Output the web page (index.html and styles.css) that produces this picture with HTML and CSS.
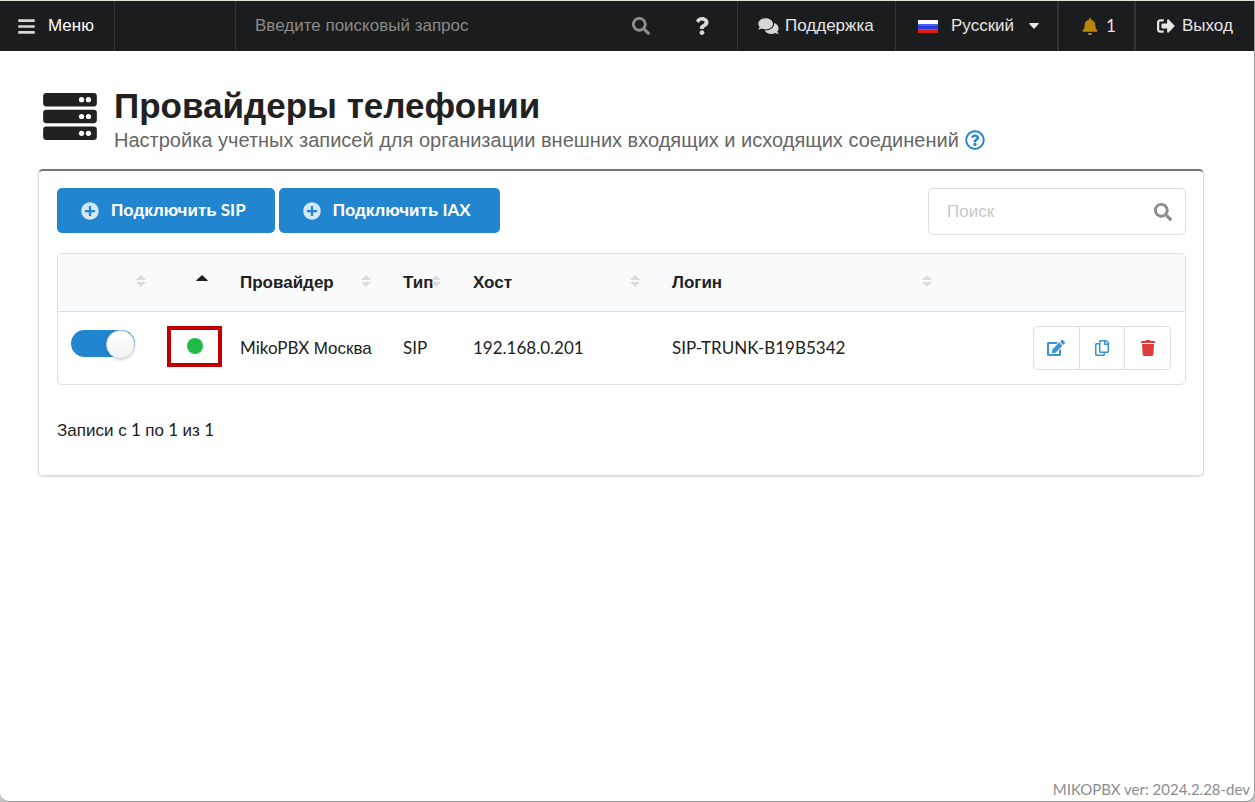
FILE: index.html
```html
<!DOCTYPE html>
<html lang="ru">
<head>
<meta charset="utf-8">
<meta name="viewport" content="width=device-width, initial-scale=1">
<title>MikoPBX – Провайдеры телефонии</title>
<link rel="stylesheet" href="styles.css">
</head>
<body>
<svg class="sprite" aria-hidden="true">
  <symbol id="i-bars" viewBox="0 0 448 512"><path d="M16 132h416c8.837 0 16-7.163 16-16V76c0-8.837-7.163-16-16-16H16C7.163 60 0 67.163 0 76v40c0 8.837 7.163 16 16 16zm0 160h416c8.837 0 16-7.163 16-16v-40c0-8.837-7.163-16-16-16H16c-8.837 0-16 7.163-16 16v40c0 8.837 7.163 16 16 16zm0 160h416c8.837 0 16-7.163 16-16v-40c0-8.837-7.163-16-16-16H16c-8.837 0-16 7.163-16 16v40c0 8.837 7.163 16 16 16z"/></symbol>
  <symbol id="i-search" viewBox="0 0 512 512"><path d="M505 442.7L405.3 343c-4.5-4.5-10.6-7-17-7H372c27.6-35.3 44-79.7 44-128C416 93.1 322.9 0 208 0S0 93.1 0 208s93.1 208 208 208c48.3 0 92.7-16.4 128-44v16.3c0 6.4 2.5 12.5 7 17l99.7 99.7c9.4 9.4 24.6 9.4 33.9 0l28.3-28.3c9.4-9.4 9.4-24.6.1-34zM208 336c-70.7 0-128-57.2-128-128 0-70.7 57.2-128 128-128 70.7 0 128 57.2 128 128 0 70.7-57.2 128-128 128z"/></symbol>
  <symbol id="i-question" viewBox="0 0 384 512"><path d="M202.021 0C122.202 0 70.503 32.703 29.914 91.026c-7.363 10.58-5.093 25.086 5.178 32.874l43.138 32.709c10.373 7.865 25.132 6.026 33.253-4.148 25.049-31.381 43.63-49.449 82.757-49.449 30.764 0 68.816 19.799 68.816 49.631 0 22.552-18.617 34.134-48.993 51.164-35.423 19.86-82.299 44.576-82.299 106.405V320c0 13.255 10.745 24 24 24h72.471c13.255 0 24-10.745 24-24v-5.773c0-42.86 125.268-44.645 125.268-160.627C377.504 66.256 286.902 0 202.021 0zM192 373.459c-38.196 0-69.271 31.075-69.271 69.271 0 38.195 31.075 69.27 69.271 69.27s69.271-31.075 69.271-69.271-31.075-69.27-69.271-69.27z"/></symbol>
  <symbol id="i-comments" viewBox="0 0 576 512"><path d="M416 192c0-88.4-93.1-160-208-160S0 103.6 0 192c0 34.3 14.1 65.9 38 92-13.4 30.2-35.5 54.2-35.8 54.5-2.2 2.3-2.8 5.7-1.5 8.7S4.8 352 8 352c36.6 0 66.9-12.3 88.7-25 32.2 15.7 70.3 25 111.3 25 114.9 0 208-71.6 208-160zm122 220c23.9-26 38-57.7 38-92 0-66.9-53.5-124.2-129.3-148.1.9 6.6 1.3 13.3 1.3 20.1 0 105.9-107.7 192-240 192-10.8 0-21.3-.8-31.7-1.9C207.8 439.6 281.8 480 368 480c41 0 79.1-9.2 111.3-25 21.8 12.7 52.1 25 88.7 25 3.2 0 6.1-1.9 7.3-4.8 1.3-2.9.7-6.3-1.5-8.7-.3-.3-22.4-24.2-35.8-54.5z"/></symbol>
  <symbol id="i-bell" viewBox="0 0 448 512"><path d="M224 512c35.32 0 63.97-28.65 63.97-64H160.03c0 35.35 28.65 64 63.97 64zm215.39-149.71c-19.32-20.76-55.47-51.99-55.47-154.29 0-77.7-54.48-139.9-127.94-155.16V32c0-17.67-14.32-32-31.98-32s-31.98 14.33-31.98 32v20.84C118.56 68.1 64.08 130.3 64.08 208c0 102.3-36.15 133.53-55.47 154.29-6 6.45-8.66 14.16-8.61 21.71.11 16.4 12.98 32 32.1 32h383.8c19.12 0 32-15.6 32.1-32 .05-7.55-2.61-15.27-8.61-21.71z"/></symbol>
  <symbol id="i-exit" viewBox="0 0 512 512"><path d="M497 273L329 441c-15 15-41 4.5-41-17v-96H152c-13.3 0-24-10.7-24-24v-96c0-13.3 10.7-24 24-24h136V88c0-21.4 25.9-32 41-17l168 168c9.3 9.4 9.3 24.6 0 34zM192 436v-40c0-6.6-5.4-12-12-12H96c-17.7 0-32-14.3-32-32V160c0-17.7 14.3-32 32-32h84c6.6 0 12-5.4 12-12V76c0-6.6-5.4-12-12-12H96c-53 0-96 43-96 96v192c0 53 43 96 96 96h84c6.6 0 12-5.4 12-12z"/></symbol>
  <symbol id="i-server" viewBox="0 0 512 448"><rect width="512" height="128" rx="30"/><rect y="160" width="512" height="128" rx="30"/><rect y="320" width="512" height="128" rx="30"/><g fill="#fff"><circle cx="432" cy="64" r="25"/><circle cx="366" cy="64" r="25"/><circle cx="432" cy="224" r="25"/><circle cx="366" cy="224" r="25"/><circle cx="432" cy="384" r="25"/><circle cx="366" cy="384" r="25"/></g></symbol>
  <symbol id="i-plus" viewBox="0 0 512 512"><path d="M256 8C119 8 8 119 8 256s111 248 248 248 248-111 248-248S393 8 256 8zm132 280H288v100c0 6.600-5.400 12-12 12h-40c-6.600 0-12-5.400-12-12V288H124c-6.600 0-12-5.400-12-12v-40c0-6.600 5.400-12 12-12h100V124c0-6.600 5.400-12 12-12h40c6.600 0 12 5.400 12 12v100h100c6.600 0 12 5.400 12 12v40c0 6.600-5.400 12-12 12z"/></symbol>
  <symbol id="i-help" viewBox="0 0 512 512"><path d="M256 8C119.043 8 8 119.083 8 256c0 136.997 111.043 248 248 248s248-111.003 248-248C504 119.083 392.957 8 256 8zm0 448c-110.532 0-200-89.431-200-200 0-110.495 89.472-200 200-200 110.491 0 200 89.471 200 200 0 110.530-89.431 200-200 200zm107.244-255.200c0 67.052-72.421 68.084-72.421 92.863V300c0 6.627-5.373 12-12 12h-45.647c-6.627 0-12-5.373-12-12v-8.659c0-35.745 27.100-50.034 47.579-61.516 17.561-9.845 28.324-16.541 28.324-29.579 0-17.246-21.999-28.693-39.784-28.693-23.189 0-33.894 10.977-48.942 29.969-4.057 5.120-11.460 6.071-16.666 2.124l-27.824-21.098c-5.107-3.872-6.251-11.066-2.644-16.363C184.846 131.491 214.940 112 261.794 112c49.071 0 101.450 38.304 101.450 88.800zM298 368c0 23.159-18.841 42-42 42s-42-18.841-42-42 18.841-42 42-42 42 18.841 42 42z"/></symbol>
  <symbol id="i-edit" viewBox="0 0 576 512"><path d="M402.6 83.2l90.2 90.2c3.8 3.8 3.8 10 0 13.8L274.4 405.6l-92.8 10.3c-12.4 1.4-22.9-9.1-21.5-21.5l10.3-92.8L388.8 83.2c3.8-3.8 10-3.8 13.8 0zm162-22.9l-48.8-48.8c-15.2-15.2-39.9-15.2-55.2 0l-35.4 35.4c-3.8 3.8-3.8 10 0 13.8l90.2 90.2c3.8 3.8 10 3.8 13.8 0l35.4-35.4c15.2-15.3 15.2-40 0-55.2zM384 346.2V448H64V128h229.8c3.2 0 6.2-1.3 8.5-3.5l40-40c7.6-7.6 2.2-20.5-8.5-20.5H48C21.5 64 0 85.500 0 112v352c0 26.500 21.500 48 48 48h352c26.500 0 48-21.500 48-48V306.200c0-10.700-12.900-16-20.500-8.500l-40 40c-2.200 2.300-3.500 5.300-3.500 8.500z"/></symbol>
  <symbol id="i-copy" viewBox="0 0 448 512"><path d="M433.941 65.941l-51.882-51.882A48 48 0 0 0 348.118 0H176c-26.510 0-48 21.490-48 48v48H48c-26.510 0-48 21.490-48 48v320c0 26.510 21.490 48 48 48h224c26.510 0 48-21.490 48-48v-48h80c26.510 0 48-21.490 48-48V99.882a48 48 0 0 0-14.059-33.941zM266 464H54a6 6 0 0 1-6-6V150a6 6 0 0 1 6-6h74v224c0 26.510 21.490 48 48 48h96v42a6 6 0 0 1-6 6zm128-96H182a6 6 0 0 1-6-6V54a6 6 0 0 1 6-6h106v88c0 13.255 10.745 24 24 24h88v202a6 6 0 0 1-6 6zm6-256h-64V48h9.632c1.591 0 3.117.632 4.243 1.757l48.368 48.368a6 6 0 0 1 1.757 4.243V112z"/></symbol>
  <symbol id="i-trash" viewBox="0 0 448 512"><path d="M432 32H312l-9.400-18.700A24 24 0 0 0 281.100 0H166.800a23.720 23.720 0 0 0-21.400 13.300L136 32H16A16 16 0 0 0 0 48v32a16 16 0 0 0 16 16h416a16 16 0 0 0 16-16V48a16 16 0 0 0-16-16zM53.200 467a48 48 0 0 0 47.900 45h245.800a48 48 0 0 0 47.900-45L416 128H32z"/></symbol>
  <symbol id="i-sort" viewBox="0 0 10 12"><path d="M5 0l4.600 4.400q.3.600-.4.600H.8q-.7 0-.4-.6zM5 12L.4 7.600Q.1 7 .8 7h8.400q.7 0 .4.600z"/></symbol>
  <symbol id="i-up" viewBox="0 0 12 6"><path d="M6 0l5.700 5.300q.2.700-.5.700H.8q-.7 0-.5-.7z"/></symbol>
  <symbol id="i-down" viewBox="0 0 10 6"><path d="M5 6L.3.900Q0 0 .8 0h8.400q.8 0 .5.900z"/></symbol>
</svg>
<div class="window">
  <nav class="topbar" aria-label="Главное меню">
    <button class="item menu" type="button"><svg class="icon bars"><use href="#i-bars"/></svg>Меню</button>
    <div class="item spacer"></div>
    <form class="item global-search">
      <input type="search" placeholder="Введите поисковый запрос" aria-label="Введите поисковый запрос">
      <button type="submit" aria-label="Найти"><svg class="icon"><use href="#i-search"/></svg></button>
    </form>
    <a class="item help" href="#help" aria-label="Справка"><svg class="icon question"><use href="#i-question"/></svg></a>
    <a class="item support" href="#support"><svg class="icon comments"><use href="#i-comments"/></svg>Поддержка</a>
    <label class="item language">
      <svg class="flag" viewBox="0 0 20 13"><path fill="#fff" d="M0 0h20v5H0z"/><path fill="#2b39e0" d="M0 4h20v5H0z"/><path fill="#4f5cf2" d="M0 4h20v2H0z"/><path fill="#e01b16" d="M0 9h20v4H0z"/><path fill="#f04038" d="M1 9h18v1H1z"/></svg>
      <select aria-label="Язык"><option>Русский</option></select>
      <svg class="icon caret"><use href="#i-down"/></svg>
    </label>
    <a class="item alerts" href="#alerts"><svg class="icon bell"><use href="#i-bell"/></svg><span class="latin">1</span></a>
    <a class="item exit" href="#logout"><svg class="icon"><use href="#i-exit"/></svg>Выход</a>
  </nav>
  <main class="page">
    <header class="page-header">
      <svg class="server"><use href="#i-server"/></svg>
      <div>
        <h1>Провайдеры телефонии</h1>
        <div class="lead">
          <p>Настройка учетных записей для организации внешних входящих и исходящих соединений</p>
          <a href="#wiki" aria-label="Подробнее"><svg class="icon"><use href="#i-help"/></svg></a>
        </div>
      </div>
    </header>
    <section class="segment">
      <div class="toolbar">
        <button class="primary" type="button"><svg class="icon"><use href="#i-plus"/></svg><span>Подключить<span class="latin"> SIP</span></span></button>
        <button class="primary" type="button"><svg class="icon"><use href="#i-plus"/></svg><span>Подключить<span class="latin"> IAX</span></span></button>
        <label class="filter"><input type="search" placeholder="Поиск" aria-label="Поиск"><svg class="icon"><use href="#i-search"/></svg></label>
      </div>
      <table class="providers">
        <colgroup><col class="c-toggle"><col class="c-status"><col class="c-name"><col class="c-type"><col class="c-host"><col><col class="c-actions"></colgroup>
        <thead>
          <tr>
            <th aria-label="Включен"><svg class="sort"><use href="#i-sort"/></svg></th>
            <th aria-label="Статус"><svg class="sort up"><use href="#i-up"/></svg></th>
            <th>Провайдер<svg class="sort"><use href="#i-sort"/></svg></th>
            <th>Тип<svg class="sort"><use href="#i-sort"/></svg></th>
            <th>Хост<svg class="sort"><use href="#i-sort"/></svg></th>
            <th>Логин<svg class="sort"><use href="#i-sort"/></svg></th>
            <th aria-label="Действия"></th>
          </tr>
        </thead>
        <tbody>
          <tr>
            <td><input class="toggle" type="checkbox" checked aria-label="Включить провайдера"></td>
            <td class="status"><span class="mark"><span class="dot"></span></span></td>
            <td><span class="latin">MikoPBX </span>Москва</td>
            <td class="latin">SIP</td>
            <td class="latin">192.168.0.201</td>
            <td class="latin">SIP-TRUNK-B19B5342</td>
            <td class="actions"><div class="group">
              <button type="button" aria-label="Изменить"><svg class="icon edit"><use href="#i-edit"/></svg></button>
              <button type="button" aria-label="Копировать"><svg class="icon copy"><use href="#i-copy"/></svg></button>
              <button type="button" aria-label="Удалить"><svg class="icon trash"><use href="#i-trash"/></svg></button>
            </div></td>
          </tr>
        </tbody>
      </table>
      <p class="summary">Записи с<span class="latin"> 1 </span>по<span class="latin"> 1 </span>из<span class="latin"> 1</span></p>
    </section>
  </main>
  <footer class="version latin">MIKOPBX ver: 2024.2.28-dev</footer>
</div>
</body>
</html>
```
FILE: styles.css
```css
* { box-sizing: border-box; }

body {
  margin: 0;
  background: #c4c4c4;
  color: #212121;
  font: 17px/24px "Liberation Sans", Arial, sans-serif;
}

button, input, select { font: inherit; color: inherit; }
button { cursor: pointer; }
a { color: inherit; text-decoration: none; }
h1, p { margin: 0; }
input[type="search"] { appearance: none; outline: 0; min-width: 0; }

.latin { font-family: Lato, "Liberation Sans", sans-serif; }
.sprite { position: absolute; width: 0; height: 0; }
.icon { width: 18px; height: 18px; flex: none; fill: currentColor; }

.window {
  display: flex;
  flex-direction: column;
  min-height: 100vh;
  background: #fff;
  border: 1px solid #999;
  border-top-color: #dce6dc;
  border-left: 0;
  border-radius: 0 0 9px 9px;
}

/* Top bar */
.topbar {
  display: flex;
  height: 50px;
  background: #1b1c1d;
  color: #e6e6e6;
}
.item {
  display: flex;
  align-items: center;
  border: 0;
  background: none;
}
.item + .item { border-left: 1px solid #323334; }
.menu { width: 114px; padding: 0 18px; gap: 13px; color: #fff; }
.bars { width: 17px; height: 19px; color: #d6d6d6; }
.spacer { width: 121px; }
.global-search { flex: 1; padding: 0 10px 0 19px; }
.global-search input {
  flex: 1;
  padding: 0;
  border: 0;
  background: none;
}
.global-search input::placeholder { color: #8a8b8b; }
.global-search button { display: flex; padding: 0; border: 0; background: none; color: #8f8f8f; }
.item.help { width: 77px; justify-content: center; padding-left: 6px; border-left: 0; color: #d9d9d9; }
.support { width: 158px; padding-left: 20px; gap: 6px; }
.comments { width: 21px; color: #d6d6d6; }
.item.language { width: 162px; padding-left: 22px; }
.flag { width: 20px; height: 13px; margin-right: 13px; }
.language select { appearance: none; padding: 0; margin-right: 14px; border: 0; background: none; outline: 0; }
.caret { width: 10px; height: 6px; }
.item.alerts { width: 77px; padding-left: 23px; gap: 8px; border-left-width: 2px; }
.bell { width: 16px; height: 17px; color: #b8860b; }
.item.exit { width: 120px; padding-left: 21px; gap: 7px; border-left-width: 2px; }

/* Page */
.page { flex: 1; padding: 34px 50px 0 38px; }
.page-header { display: flex; gap: 17px; padding: 0 5px; margin-bottom: 16px; }
.server { width: 54px; height: 47px; margin-top: 8px; fill: #212121; }
.page-header h1 { font-size: 35px; line-height: 42px; font-weight: 700; }
.lead { display: flex; align-items: center; gap: 6px; font-size: 20px; line-height: 26px; color: #666; }
.lead a { display: flex; color: #2185d0; }
.lead .icon { width: 20px; height: 20px; }

.segment {
  padding: 17px 17px 32px 18px;
  border: 1px solid #d9dadb;
  border-top: 2px solid #767676;
  border-radius: 5px;
  box-shadow: 0 1px 2px rgba(34, 36, 38, .15);
}
.toolbar { display: flex; align-items: flex-start; gap: 4px; margin-bottom: 18px; }
.primary {
  display: flex;
  align-items: center;
  gap: 12px;
  height: 45px;
  padding: 0 29px 0 24px;
  border: 0;
  border-radius: 5px;
  background: #2185d0;
  color: #fff;
  font-weight: 700;
}
.primary .icon { color: #d3e7f6; }
.filter {
  display: flex;
  align-items: center;
  width: 258px;
  height: 47px;
  margin-left: auto;
  padding: 0 13px 0 18px;
  border: 1px solid #dedede;
  border-radius: 5px;
  color: #8c8c8c;
}
.filter input { flex: 1; padding: 0; border: 0; background: none; }
.filter input::placeholder { color: #c7c7c7; }

/* Providers table */
.providers {
  width: 100%;
  table-layout: fixed;
  border: 1px solid #dedede;
  border-spacing: 0;
  border-radius: 5px;
}
.c-toggle { width: 106px; }
.c-status { width: 62px; }
.c-name { width: 163px; }
.c-type { width: 70px; }
.c-host { width: 199px; }
.c-actions { width: 235px; }
.providers th {
  position: relative;
  height: 58px;
  padding: 0 0 0 14px;
  border-bottom: 1px solid #dedede;
  background: #f9fafb;
  text-align: left;
  font-weight: 700;
}
.providers th:first-child { border-top-left-radius: 4px; }
.providers th:last-child { border-top-right-radius: 4px; }
.sort { position: absolute; top: 21px; right: 18px; width: 10px; height: 12px; fill: #dcdcdc; }
.sort.up { width: 12px; height: 6px; fill: #212121; }
.providers td { height: 72px; padding: 0 0 0 14px; white-space: nowrap; }
.providers td:first-child, .providers th:first-child { padding-left: 13px; }
.toggle {
  appearance: none;
  display: flex;
  justify-content: flex-end;
  width: 64px;
  height: 27px;
  margin: 0 0 10px;
  border-radius: 14px;
  background: #2185d0;
}
.toggle::before {
  content: "";
  width: 27px;
  height: 27px;
  border: 1px solid #d4d6d8;
  border-radius: 50%;
  background: linear-gradient(#fff, #f3f3f3);
  box-shadow: 0 1px 3px rgba(34, 36, 38, .2);
}
.providers .status { padding: 0 4px 4px 3px; }
.mark { display: flex; align-items: center; justify-content: center; height: 41px; width: 55px; border: 4px solid #c00000; }
.dot { width: 16px; height: 16px; border-radius: 50%; background: #21ba45; }
.actions .group {
  display: flex;
  width: 138px;
  height: 44px;
  margin: 0 14px 0 auto;
  border: 1px solid #dedede;
  border-radius: 5px;
}
.group button {
  display: flex;
  flex: 1;
  align-items: center;
  justify-content: center;
  padding: 0;
  border: 0;
  background: none;
  color: #3a94d6;
}
.group button + button { border-left: 1px solid #dedede; }
.group .icon { height: 16px; }
.group .copy, .group .trash { width: 14px; }
.group .trash { color: #de3c3c; }
.summary { margin-top: 33px; }

.version { padding: 0 4px 1px 0; text-align: right; font-size: 15px; line-height: 22px; color: #8c8c8c; }
```
